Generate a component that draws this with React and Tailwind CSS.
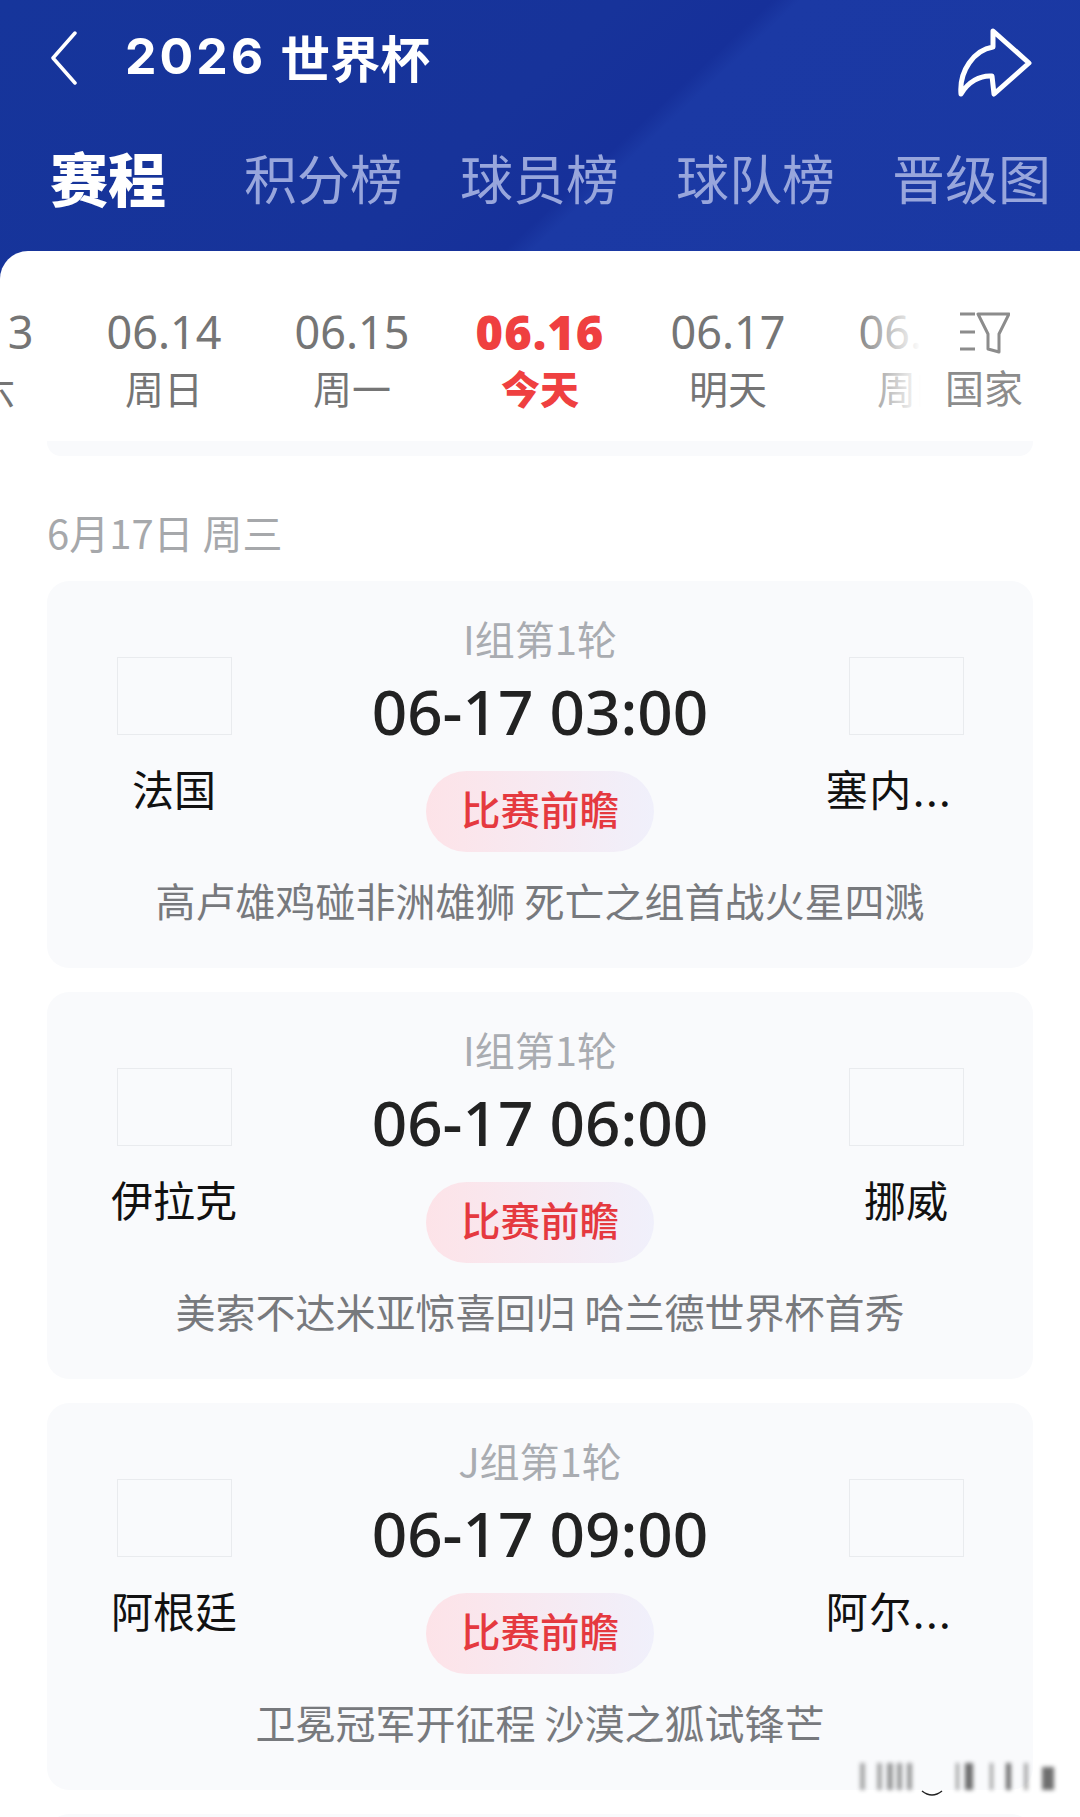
import React from 'react';

const cjk = { fontFamily: '"Noto Sans CJK SC", sans-serif' };

const days = [
  { num: '06.13', label: '周六' },
  { num: '06.14', label: '周日' },
  { num: '06.15', label: '周一' },
  { num: '06.16', label: '今天', active: true },
  { num: '06.17', label: '明天' },
  { num: '06.18', label: '周四' },
];

const matches = [
  { round: 'I组第1轮', time: '06-17 03:00', home: '法国', away: '塞内...', awayCut: true, desc: '高卢雄鸡碰非洲雄狮 死亡之组首战火星四溅' },
  { round: 'I组第1轮', time: '06-17 06:00', home: '伊拉克', away: '挪威', desc: '美索不达米亚惊喜回归 哈兰德世界杯首秀' },
  { round: 'J组第1轮', time: '06-17 09:00', home: '阿根廷', away: '阿尔...', awayCut: true, desc: '卫冕冠军开征程 沙漠之狐试锋芒' },
];

function Team({ name, cut }) {
  return (
    <div className="flex flex-col items-center">
      <div className="mt-[38px] h-[78px] w-[115px] border border-[#e9ebee]"></div>
      <div className={`mt-[31px] h-[48px] text-[42px] leading-[44px] whitespace-nowrap text-[#111] ${cut ? 'pr-[34px] tracking-[1.5px]' : ''}`}>{name}</div>
    </div>
  );
}

function MatchCard({ match }) {
  return (
    <div className="h-[387px] shrink-0 rounded-[22px] bg-[#f9fafc] pt-[38px]">
      <div className="grid h-[233px] grid-cols-[254px_1fr_254px]">
        <Team name={match.home} />
        <div className="flex flex-col items-center">
          <div className="h-[44px] text-[40px] leading-[38px] text-[#a9acb1]">{match.round}</div>
          <div className="mt-[11px] h-[76px] text-[62px] leading-[74px] font-medium whitespace-nowrap text-[#222]" style={{ fontFamily: '"Noto Sans", sans-serif' }}>{match.time}</div>
          <div className="mt-[21px] flex h-[81px] w-[228px] items-center justify-center rounded-full bg-gradient-to-r from-[#fde3e8] to-[#f0f0fb] pb-[7px] text-[39.5px] font-medium text-[#e5393f]">比赛前瞻</div>
        </div>
        <Team name={match.away} cut={match.awayCut} />
      </div>
      <div className="mt-[29px] h-[44px] text-center text-[40px] leading-[38px] whitespace-nowrap text-[#77797d]">{match.desc}</div>
    </div>
  );
}

export default function App() {
  return (
    <div className="relative h-[1817px] w-[1080px] overflow-hidden bg-white" style={cjk}>
      {/* header */}
      <div className="h-[280px] bg-[linear-gradient(137deg,#16359b_0%,#17339a_45%,#16309a_56%,#1b39a4_58%,#1a38a2_100%)] text-white">
        <div className="flex h-[112px] items-center pr-[46px] pl-[50px]">
          <svg className="mt-[4px]" width="28" height="54" viewBox="0 0 28 54" fill="none" stroke="white" strokeWidth="3.5" strokeLinecap="round" strokeLinejoin="round">
            <path d="M25 2 L3 27 L25 52" />
          </svg>
          <div className="ml-[47px] flex items-center text-[50px] leading-none font-bold">
            <span style={{ fontFamily: 'Inter, sans-serif' }} className="tracking-[3px]">2026</span>
            <span className="ml-[14px]">世界杯</span>
          </div>
          <svg className="mt-[14px] ml-auto" width="80" height="75" viewBox="0 0 80 75" fill="none" stroke="white" strokeWidth="5" strokeLinejoin="round">
            <path d="M7 68 C5 45 20 24 39 21 L39 5 L75 37 L40 68 L38 50 C26 49 14 56 7 68 Z" />
          </svg>
        </div>
        <div className="mt-[33px] flex h-[64px] items-center pl-[50px]">
          <div className="w-[194px] text-[58px] leading-none font-black">赛程</div>
          <div className="flex gap-[57px] text-[53px] leading-none whitespace-nowrap text-[#98a6dc]">
            <span>积分榜</span>
            <span>球员榜</span>
            <span>球队榜</span>
            <span>晋级图</span>
          </div>
        </div>
      </div>

      {/* sheet */}
      <div className="absolute top-[251px] left-0 h-[1566px] w-full rounded-t-[28px] bg-white">
        <div className="relative h-[161px] overflow-hidden pt-[56px]">
          <div className="ml-[-118px] flex">
            {days.map((d) => (
              <div key={d.num} className={`flex w-[188px] shrink-0 flex-col items-center ${d.active ? 'font-black text-[#ef4040]' : 'text-[#757575]'}`}>
                <div className={`h-[50px] leading-[50px] ${d.active ? 'text-[47px] tracking-[1px]' : 'text-[45px]'}`} style={{ fontFamily: '"Noto Sans", sans-serif' }}>{d.num}</div>
                <div className="mt-[11px] h-[44px] text-[39px] leading-[38px]">{d.label}</div>
              </div>
            ))}
          </div>
          <div className="absolute top-0 right-0 flex h-full w-[230px]">
            <div className="w-[71px] bg-gradient-to-r from-transparent to-white"></div>
            <div className="flex flex-1 flex-col items-start bg-white pt-[61px] pl-[24px]">
              <svg className="ml-[15px]" width="50" height="42" viewBox="0 0 50 42" fill="none" stroke="#8c8c8c" strokeWidth="3">
                <path d="M0 2 H15 M0 20 H15 M0 37 H15" />
                <path d="M18 2 H49 L39 22 V40 L28 37 V22 Z" strokeLinejoin="round" />
              </svg>
              <div className="mt-[13px] text-[39px] leading-[38px] text-[#8c8c8c]">国家</div>
            </div>
          </div>
        </div>
        <div className="mt-[29px] px-[47px]">
          <div className="h-[15px] rounded-b-[14px] bg-[#f9fafc]"></div>
          <div className="mt-[57px] h-[44px] text-[40px] leading-[38px] text-[#a6a8ab]">6月17日 周三</div>
          <div className="mt-[24px] flex flex-col gap-[24px]">
            {matches.map((m) => (
              <MatchCard key={m.time} match={m} />
            ))}
            <div className="h-[40px] shrink-0 rounded-t-[22px] bg-[#f9fafc]"></div>
          </div>
        </div>
      </div>

      {/* blurred watermark */}
      <svg className="absolute top-[1755px] left-[850px]" width="215" height="50" viewBox="0 0 215 50">
        <g fill="#333" opacity="0.7" style={{ filter: 'blur(2px)' }}>
          <rect x="10" y="8" width="5" height="27" opacity="0.6" />
          <rect x="27" y="8" width="5" height="27" opacity="0.6" />
          <rect x="37" y="8" width="6" height="27" opacity="0.7" />
          <rect x="47" y="8" width="5" height="27" opacity="0.7" />
          <rect x="57" y="8" width="5" height="27" opacity="0.7" />
          <rect x="106" y="8" width="3" height="27" opacity="0.7" />
          <rect x="115" y="8" width="8" height="27" />
          <rect x="140" y="8" width="3" height="27" opacity="0.7" />
          <rect x="156" y="8" width="5" height="27" />
          <rect x="174" y="8" width="4" height="27" opacity="0.6" />
          <rect x="192" y="12" width="12" height="23" />
        </g>
        <path d="M72 36 Q82 44 92 36" fill="none" stroke="#222" strokeWidth="1.5" />
      </svg>
    </div>
  );
}
